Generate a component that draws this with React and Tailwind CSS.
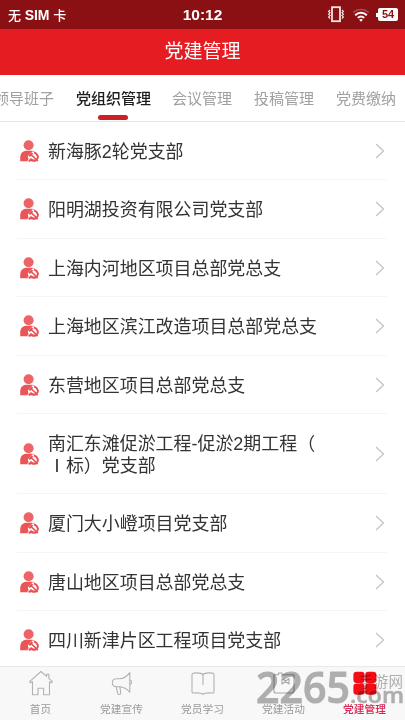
import clsx from "clsx";

const tabs = ["领导班子", "党组织管理", "会议管理", "投稿管理", "党费缴纳"];

const branches = [
  { name: "新海豚2轮党支部" },
  { name: "阳明湖投资有限公司党支部" },
  { name: "上海内河地区项目总部党总支" },
  { name: "上海地区滨江改造项目总部党总支" },
  { name: "东营地区项目总部党总支" },
  { name: "南汇东滩促淤工程-促淤2期工程（\nⅠ标）党支部", tall: true },
  { name: "厦门大小嶝项目党支部" },
  { name: "唐山地区项目总部党总支" },
  { name: "四川新津片区工程项目党支部" },
];

const navItems = [
  { label: "首页", Icon: HomeIcon },
  { label: "党建宣传", Icon: HornIcon },
  { label: "党员学习", Icon: BookIcon },
  { label: "党建活动", Icon: ActivityIcon },
  { label: "党建管理", Icon: GridIcon, active: true },
];

function VibrateIcon() {
  return (
    <svg width="18" height="17" viewBox="0 0 18 17" fill="none" stroke="#f6e3e3">
      <rect x="5" y="1.2" width="8" height="14" strokeWidth="1.8" />
      <path d="M3 4l-1.4 1.4L3 6.8 1.6 8.2 3 9.6 1.6 11 3 12.6M15 4l1.4 1.4L15 6.8l1.4 1.4L15 9.6l1.4 1.4-1.4 1.6" strokeWidth="1.2" />
    </svg>
  );
}

function WifiIcon() {
  return (
    <svg width="18" height="14" viewBox="0 0 18 14" fill="none" strokeWidth="2">
      <path d="M1.2 4.6a11.2 11.2 0 0 1 15.6 0" stroke="#a8484c" strokeWidth="1.5" />
      <path d="M3.2 7.2a8.2 8.2 0 0 1 11.6 0M5.8 9.9a4.6 4.6 0 0 1 6.4 0" stroke="#fff" />
      <path d="M9 13.8l-1.9-2a2.8 2.8 0 0 1 3.8 0z" fill="#fff" />
    </svg>
  );
}

function MemberIcon() {
  return (
    <svg width="20" height="22" viewBox="0 0 20 22" className="mt-px shrink-0">
      <circle cx="8.6" cy="5.3" r="5" fill="#ee6466" />
      <path d="M.2 21.3v-3.7c0-4.2 2.7-6.9 6.6-6.9h3.9c3.9 0 6.6 2.7 6.9 6.9l.2 3.7z" fill="#ea5558" />
      <path d="M7.8 16.2l4.4-4.6 3.4.4 2.8 2.8.4 3.4-1.2 3.1H7.2l1.3-2z" fill="#fff" />
      <path d="M14 12.4c4 1.5 4.8 5 2.8 7-1.7 1.6-4.2 1.3-5.8 0l-2.1 1.8" fill="none" stroke="#e95054" strokeWidth="2" />
      <path d="M9.2 16.2l3.2-3.3" fill="none" stroke="#e95054" strokeWidth="2.2" />
      <path d="M11 14.5l6.8 6.5" fill="none" stroke="#e95054" strokeWidth="1.7" />
    </svg>
  );
}

function Chevron() {
  return (
    <svg width="10" height="16" viewBox="0 0 10 16" fill="none" stroke="#c4c4c7" strokeWidth="1.3" className="mt-px ml-auto shrink-0">
      <path d="M1 1l7.5 7L1 15" />
    </svg>
  );
}

function HomeIcon() {
  return (
    <svg width="26" height="26" viewBox="0 0 26 26" fill="none" stroke="#b2b2b2" strokeWidth="1.1" strokeLinejoin="round">
      <path d="M13 1.5L1.6 11.6l1 1.3 1.9-1.2V24.7H10v-6.4h5.6v6.4h5.9v-13l1.9 1.2 1-1.3-3.6-3.2V4.2h-2.2v2.2z" />
    </svg>
  );
}

function HornIcon() {
  return (
    <svg width="26" height="26" viewBox="0 0 26 26" fill="none" stroke="#b2b2b2" strokeWidth="1.1" strokeLinejoin="round" strokeLinecap="round">
      <path d="M20.8 2.6c-3 3.9-6 6-10 6.2H7.4c-5.4.1-5.4 7.7 0 7.9h3.2c4 .2 7.4 2.2 10.2 5.4zM20.8 9.8c2.4.4 2.4 4.2 0 4.6" />
      <path d="M7.2 16.7l1.5 6.6c.4 1.6 3.2 1.5 3.1-.3l-1-6.3" />
    </svg>
  );
}

function BookIcon() {
  return (
    <svg width="26" height="26" viewBox="0 0 26 26" fill="none" stroke="#b2b2b2" strokeWidth="1.1" strokeLinejoin="round">
      <path d="M13 24.4c-1.4-1.7-5.4-1.7-9.4-1.4-1 .1-1.6-.4-1.6-1.4V4.8C2 3.8 2.6 3.2 3.6 3.1 8 2.6 11.6 2.9 13 4.6c1.4-1.7 5-2 9.4-1.5 1 .1 1.6.7 1.6 1.7v16.8c0 1-.6 1.5-1.6 1.4-4-.3-8-.3-9.4 1.4zM13 4.6V15" />
    </svg>
  );
}

function ActivityIcon() {
  return (
    <svg width="26" height="26" viewBox="0 0 26 26" fill="none" stroke="#a6a6a6" strokeWidth="1.1" strokeLinejoin="round">
      <path d="M3 4.8h4.5V3H11v1.8h12V21c0 1.2-.8 2-2 2H5c-1.2 0-2-.8-2-2z" />
      <path d="M11 8.5v6M18 8.5v6M11 8.5l7 5.5M18 8.5L11 14" />
    </svg>
  );
}

function GridIcon() {
  return (
    <svg width="26" height="26" viewBox="0 0 26 26" fill="#f20d17">
      <rect x="1.4" y="1.8" width="11.2" height="11.2" rx="3.2" />
      <rect x="13.2" y="1.8" width="11.2" height="11.2" rx="3.2" />
      <rect x="1.4" y="13.6" width="11.2" height="11.2" rx="3.2" />
      <rect x="13.2" y="13.6" width="11.2" height="11.2" rx="3.2" />
    </svg>
  );
}

function StatusBar() {
  return (
    <div className="grid h-[29px] shrink-0 grid-cols-3 items-center bg-[#8a1014] text-white">
      <span className="pt-px pl-2 text-[13px] font-medium whitespace-nowrap">
        无 <span className="text-[14px] font-bold">SIM</span> 卡
      </span>
      <span className="pt-px text-center text-[15.5px] font-bold">10:12</span>
      <div className="flex items-center justify-end pr-[7px]">
        <VibrateIcon />
        <span className="ml-[7px]">
          <WifiIcon />
        </span>
        <span className="ml-[6px] h-1 w-0.5 bg-white" />
        <span className="flex h-[13px] w-[20px] items-center justify-center rounded-xs bg-white text-[11px] font-bold text-[#8a1014]">54</span>
      </div>
    </div>
  );
}

function Watermark() {
  return (
    <div className="pointer-events-none absolute top-[667px] left-[255px] h-[38px] w-[150px] text-[#555] opacity-45 mix-blend-multiply">
      <svg width="150" height="38" viewBox="0 0 150 38" fill="currentColor" fontFamily="Open Sans, Noto Sans CJK SC, sans-serif">
        <text x="1" y="35.5" fontSize="43" fontWeight="600" textLength="94" lengthAdjust="spacingAndGlyphs" stroke="currentColor" strokeWidth="1" strokeLinejoin="round">2265</text>
        <text x="95" y="35.5" fontSize="22" fontWeight="600" textLength="54" lengthAdjust="spacingAndGlyphs" stroke="currentColor" strokeWidth="0.5">.com</text>
        <text x="104" y="19.5" fontSize="14.5" textLength="44">手游网</text>
      </svg>
    </div>
  );
}

export default function App() {
  return (
    <div className="relative flex h-[720px] w-[405px] flex-col overflow-hidden bg-white font-['Liberation_Sans','Noto_Sans_CJK_SC',sans-serif]">
      <StatusBar />

      <header className="flex h-[46px] shrink-0 items-center justify-center bg-[#e61c23] pt-px text-[19px] text-white">
        党建管理
      </header>

      <div className="flex h-[46.5px] shrink-0 justify-end gap-[22px] border-b border-[#e6e6e6] pr-[9px] text-[15px] whitespace-nowrap text-[#a0a0a0]">
        {tabs.map((tab, i) => (
          <div
            key={tab}
            className={clsx("flex shrink-0 flex-col items-center", i === 1 && "-mr-px font-medium text-[#1c1c1c]")}
          >
            <span className="pt-[13px] leading-[22px]">{tab}</span>
            {i === 1 && <span className="mt-[5px] h-[5px] w-[30px] rounded-full bg-[#cb2026]" />}
          </div>
        ))}
      </div>

      <ul className="min-h-0 flex-1 overflow-hidden pr-[18px] pl-[17px]">
        {branches.map(({ name, tall }) => (
          <li
            key={name}
            className={clsx(
              "flex items-center border-b border-[#f5f5f5] pr-[2px] pl-[3px] text-[17.95px] leading-[22px] text-[#333]",
              tall ? "h-[80px]" : "h-[58.5px]"
            )}
          >
            <MemberIcon />
            <span className="ml-2 w-[290px] pt-[3px] whitespace-pre-line">{name}</span>
            <Chevron />
          </li>
        ))}
      </ul>

      <nav className="flex h-[54px] shrink-0 border-t border-[#e9e9e9] bg-[#f8f8f8]">
        {navItems.map(({ label, Icon, active }) => (
          <div
            key={label}
            className={clsx(
              "flex flex-1 flex-col items-center pt-[3px] text-[10.7px] leading-[16px]",
              active ? "font-medium text-[#d72652]" : "text-[#999]"
            )}
          >
            <Icon />
            <span className="mt-[5px]">{label}</span>
          </div>
        ))}
      </nav>

      <Watermark />
    </div>
  );
}
